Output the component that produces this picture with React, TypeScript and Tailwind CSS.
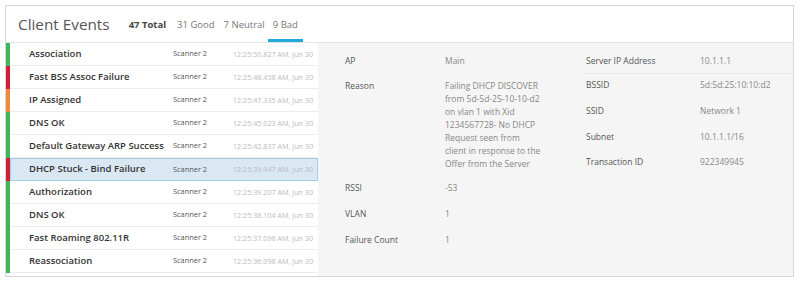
import React from "react";

type Ev = { name: string; time: string; color: string; selected?: boolean };

const events: Ev[] = [
  { name: "Association", time: "12:25:50.827 AM, Jun 30", color: "bg-[#3fb65e]" },
  { name: "Fast BSS Assoc Failure", time: "12:25:48.458 AM, Jun 30", color: "bg-[#cf2038]" },
  { name: "IP Assigned", time: "12:25:47.335 AM, Jun 30", color: "bg-[#ee8a3a]" },
  { name: "DNS OK", time: "12:25:45.023 AM, Jun 30", color: "bg-[#3fb65e]" },
  { name: "Default Gateway ARP Success", time: "12:25:42.837 AM, Jun 30", color: "bg-[#3fb65e]" },
  { name: "DHCP Stuck - Bind Failure", time: "12:25:39.947 AM, Jun 30", color: "bg-[#cf2038]", selected: true },
  { name: "Authorization", time: "12:25:39.207 AM, Jun 30", color: "bg-[#3fb65e]" },
  { name: "DNS OK", time: "12:25:38.104 AM, Jun 30", color: "bg-[#3fb65e]" },
  { name: "Fast Roaming 802.11R", time: "12:25:37.098 AM, Jun 30", color: "bg-[#3fb65e]" },
  { name: "Reassociation", time: "12:25:36.098 AM, Jun 30", color: "bg-[#3fb65e]" },
];

const reason = [
  "Failing DHCP DISCOVER",
  "from 5d-5d-25-10-10-d2",
  "on vlan 1 with Xid",
  "1234567728- No DHCP",
  "Request seen from",
  "client in response to the",
  "Offer from the Server",
];

function Field({ label, value, lw }: { label: string; value: React.ReactNode; lw: string }) {
  return (
    <div className="flex">
      <div className={`${lw} shrink-0 text-[#555]`}>{label}</div>
      <div className="text-[#888]">{value}</div>
    </div>
  );
}

export default function App() {
  return (
    <div className="w-[800px] h-[281px] bg-white pt-[5px] pl-[5px] font-['Open_Sans',sans-serif]">
      <div className="w-[789px] h-[272px] border border-[#d6d6d6] flex flex-col">
        <div className="h-[37px] flex items-end border-b border-[#e3e3e3] shrink-0">
          <div className="text-[15.3px] text-[#555] leading-none pl-[12px] pb-[10px]">Client Events</div>
          <div className="flex items-end ml-[19px] text-[9.5px] text-[#777]">
            <div className="pb-[10px] font-bold text-[#444] mr-[11px]">47 Total</div>
            <div className="pb-[10px] mr-[9px]">31 Good</div>
            <div className="pb-[10px] mr-[3px]">7 Neutral</div>
            <div className="pb-[7px] border-b-[3px] border-[#1fa9db] px-[5px]">9 Bad</div>
          </div>
        </div>
        <div className="flex flex-1 min-h-0">
          <div className="w-[312px] shrink-0 flex flex-col">
            {events.map((e, i) => (
              <div key={i} className="flex h-[23px]">
                <div className={`w-[4px] shrink-0 ${e.color}`} />
                <div
                  className={`flex flex-1 items-center ${
                    e.selected
                      ? "bg-[#d9e8f3] border border-[#a6cde6] pl-[18px]"
                      : "border-b border-[#ececec] pl-[19px]"
                  }`}
                >
                  <div className="w-[144px] text-[9.5px] font-semibold text-[#333] whitespace-nowrap">{e.name}</div>
                  <div className="w-[60px] text-[7.4px] text-[#555] whitespace-nowrap">Scanner 2</div>
                  <div className="text-[7.2px] text-[#bbb] whitespace-nowrap">{e.time}</div>
                </div>
              </div>
            ))}
          </div>
          <div className="flex-1 bg-[#f5f5f5] flex text-[8.5px] leading-[13px] pt-[11px]">
            <div className="w-[268px] pl-[27px] flex flex-col">
              <Field label="AP" value="Main" lw="w-[100px]" />
              <div className="h-[12px]" />
              <Field
                label="Reason"
                lw="w-[100px]"
                value={reason.map((l) => (
                  <div key={l}>{l}</div>
                ))}
              />
              <div className="h-[11px]" />
              <Field label="RSSI" value="-53" lw="w-[100px]" />
              <div className="h-[13px]" />
              <Field label="VLAN" value="1" lw="w-[100px]" />
              <div className="h-[13px]" />
              <Field label="Failure Count" value="1" lw="w-[100px]" />
            </div>
            <div className="flex-1 flex flex-col">
              <div className="border-b border-[#e6e6e6] pb-[6px]">
                <Field label="Server IP Address" value="10.1.1.1" lw="w-[114px]" />
              </div>
              <div className="h-[4px]" />
              <Field label="BSSID" value="5d:5d:25:10:10:d2" lw="w-[114px]" />
              <div className="h-[13px]" />
              <Field label="SSID" value="Network 1" lw="w-[114px]" />
              <div className="h-[13px]" />
              <Field label="Subnet" value="10.1.1.1/16" lw="w-[114px]" />
              <div className="h-[12px]" />
              <Field label="Transaction ID" value="922349945" lw="w-[114px]" />
            </div>
          </div>
        </div>
      </div>
    </div>
  );
}
